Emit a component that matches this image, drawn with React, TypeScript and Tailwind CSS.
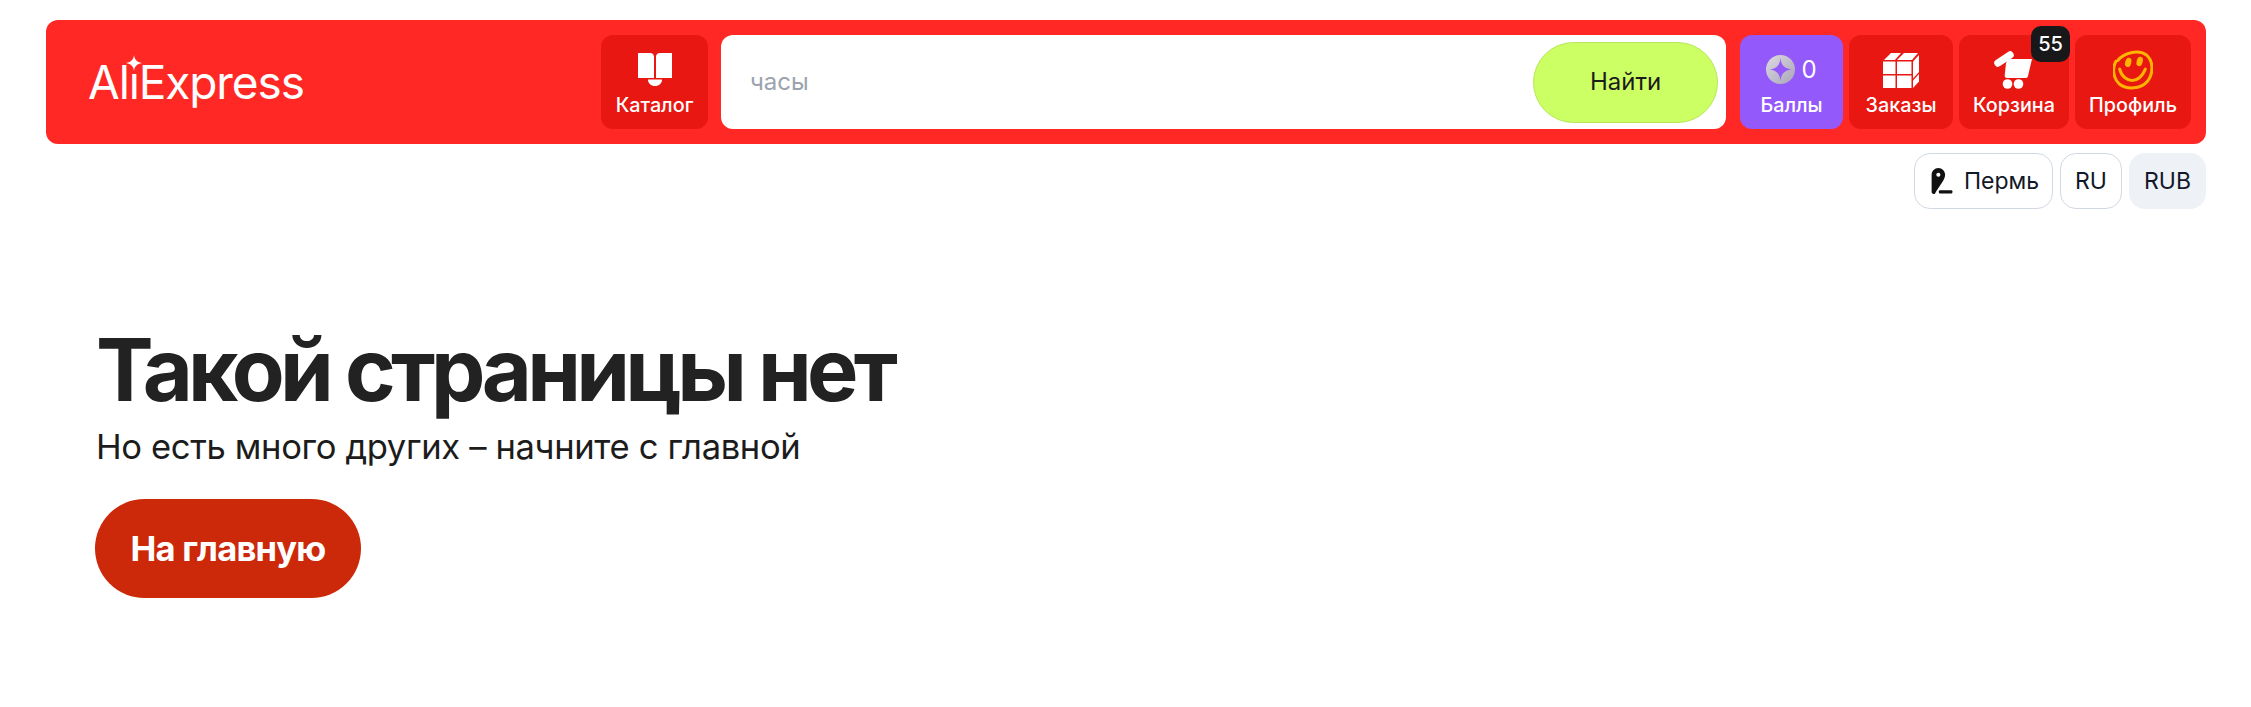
import React from "react";

const BookIcon = () => (
  <svg width="36" height="33" viewBox="0 0 36 33" fill="white">
    <path d="M1 0h12c3 0 4 2 4 4v21H1z" />
    <path d="M35 0H23c-3 0-4 2-4 4v21h16z" />
    <path d="M11 26.500h14c0 4-3 6.500-7 6.500s-7-2.500-7-6.500z" />
  </svg>
);

const Coin = () => (
  <svg width="29" height="29" viewBox="0 0 28 28">
    <defs>
      <linearGradient id="coin" x1="0" y1="0" x2="1" y2="1">
        <stop offset="0" stopColor="#dedbe2" />
        <stop offset="1" stopColor="#a8a4b8" />
      </linearGradient>
    </defs>
    <circle cx="14" cy="14" r="14" fill="url(#coin)" />
    <path d="M14 3c.6 7 4 10.400 11 11-7 .6-10.400 4-11 11-.6-7-4-10.400-11-11 7-.6 10.400-4 11-11z" fill="#9459fb" />
  </svg>
);

const BoxIcon = () => (
  <svg width="36" height="36" viewBox="0 0 36 36" fill="white">
    <path d="M1 8l7-7h10l-6 7z" />
    <path d="M14 8l7-7h14l-6 7z" />
    <path d="M0 9.500h12.500V22H0z" />
    <path d="M14 9.500h14.500V22H14z" />
    <path d="M0 23.500h12.500V36H0z" />
    <path d="M14 23.500h14.500V36H14z" />
    <path d="M30 9.500l6-6.500v17l-6 6.500z" />
    <path d="M30 28.500l6-6.500v7.500L30 36z" />
  </svg>
);

const CartIcon = () => (
  <svg width="40" height="38" viewBox="0 0 40 38" fill="white">
    <path d="M4 12 16 4" stroke="white" strokeWidth="7.500" strokeLinecap="round" fill="none" />
    <path d="M14 8h24l-4 17c-.3 1.500-1.300 2-2.500 2H13c-1.500 0-2.500-1-2.300-2.500L12 12z" />
    <circle cx="13.500" cy="33" r="4.800" />
    <circle cx="24.500" cy="33" r="4.800" />
  </svg>
);

const SmileIcon = () => (
  <svg width="40" height="40" viewBox="0 0 42 42" fill="none" stroke="#ffb400" strokeWidth="3.200" strokeLinecap="round">
    <path d="M5 11C12 2 28-1 36 6c7 7 6 20 0 27-7 8-21 9-29 3C0 30-1 19 3 12" />
    <ellipse cx="16" cy="13" rx="3.200" ry="5" fill="#ffb400" stroke="none" transform="rotate(15 16 13)" />
    <ellipse cx="28" cy="12" rx="3.200" ry="5" fill="#ffb400" stroke="none" transform="rotate(15 28 12)" />
    <path d="M7 20c2 8 8 12 13 12 6 0 11-5 14-12" />
  </svg>
);

const PinIcon = () => (
  <svg width="22" height="27" viewBox="0 0 20 26" fill="#111">
    <path fillRule="evenodd" d="M6.500 0C10 0 13 3 13 6.500 13 11 9 15 3 25 1 25 0 24 0 23V6.500C0 3 3 0 6.500 0zM6.500 4.500a2 2 0 1 0 0 4 2 2 0 0 0 0-4z" />
    <rect x="7" y="21.500" width="13" height="3" rx="1" />
  </svg>
);

function NavButton({ widthClass, bgClass, label, children }: { widthClass: string; bgClass: string; label: string; children: React.ReactNode }) {
  return (
    <div className={`${widthClass} ${bgClass} h-[94px] pt-[2px] rounded-[12px] flex flex-col items-center justify-center shrink-0`}>
      <div className="h-[40px] flex items-center justify-center">{children}</div>
      <span className="mt-[3px] text-[19.800px] leading-[24px] font-medium text-white">{label}</span>
    </div>
  );
}

export default function App() {
  return (
    <div className="min-h-[707px] bg-white pl-[46px] pt-[20px] text-[#111827] font-['Inter',sans-serif]">
      <header className="h-[124px] w-[2160px] bg-[#ff2824] rounded-[12px] flex items-center pl-[42px] pr-[15px]">
        <div className="w-[513px] shrink-0 text-white text-[46px] leading-none font-normal tracking-[-1.100px]">
          Al
          <span className="relative inline-block">
            ı
            <svg className="absolute left-[-3px] top-[-4px]" width="16" height="16" viewBox="0 0 15 15" fill="white">
              <path d="M7.500 0c.6 4.500 2.400 6.300 7.500 7.500-5.100 1.200-6.900 3-7.500 7.500C6.900 10.500 5.100 8.700 0 7.500 5.100 6.300 6.900 4.500 7.500 0z" />
            </svg>
          </span>
          Express
        </div>
        <NavButton widthClass="w-[107px]" bgClass="bg-[#e81711]" label="Каталог">
          <BookIcon />
        </NavButton>
        <div className="ml-[13px] w-[1005px] h-[94px] bg-white rounded-[12px] flex items-center justify-between pl-[29px] pr-[8px] shrink-0">
          <span className="text-[24px] text-[#9ca3af]">часы</span>
          <div className="w-[185px] h-[81px] rounded-full bg-[#ccff63] border border-[#b7e65a] flex items-center justify-center text-[24px] text-[#1c1c1c]">
            Найти
          </div>
        </div>
        <div className="ml-[14px] flex gap-[6px]">
          <NavButton widthClass="w-[103px]" bgClass="bg-[#9459fb]" label="Баллы">
            <div className="flex items-center gap-[6px] text-white text-[24px] leading-none">
              <Coin />
              <span>0</span>
            </div>
          </NavButton>
          <NavButton widthClass="w-[104px]" bgClass="bg-[#e81711]" label="Заказы">
            <BoxIcon />
          </NavButton>
          <div className="relative">
            <NavButton widthClass="w-[110px]" bgClass="bg-[#e81711]" label="Корзина">
              <CartIcon />
            </NavButton>
            <div className="absolute left-[72px] top-[-9px] w-[39px] h-[36px] rounded-[10px] bg-[#18181b] text-white text-[20px] font-medium flex items-center justify-center">
              55
            </div>
          </div>
          <NavButton widthClass="w-[116px]" bgClass="bg-[#e81711]" label="Профиль">
            <SmileIcon />
          </NavButton>
        </div>
      </header>

      <div className="mt-[9px] w-[2160px] flex justify-end gap-[7px] text-[23px] text-[#111827]">
        <div className="h-[56px] w-[139px] pl-[3px] rounded-[16px] border border-[#d1d9e4] flex items-center justify-center gap-[11px]">
          <PinIcon />
          <span>Пермь</span>
        </div>
        <div className="h-[56px] w-[62px] rounded-[16px] border border-[#d1d9e4] flex items-center justify-center">RU</div>
        <div className="h-[56px] w-[77px] rounded-[16px] bg-[#eef1f6] flex items-center justify-center">RUB</div>
      </div>

      <main className="pl-[50px] pt-[115px]">
        <h1 className="text-[86.400px] leading-[92px] font-bold tracking-[-4.700px] text-[#222222]">Такой страницы нет</h1>
        <p className="mt-[8px] text-[34.560px] leading-[46px] tracking-[-0.350px] text-[#1c1c1c]">Но есть много других – начните с главной</p>
        <div className="mt-[29px] ml-[-1px] w-[266px] h-[99px] rounded-full bg-[#cc290a] text-white text-[34.560px] font-bold tracking-[-0.800px] flex items-center justify-center">
          На главную
        </div>
      </main>
    </div>
  );
}
